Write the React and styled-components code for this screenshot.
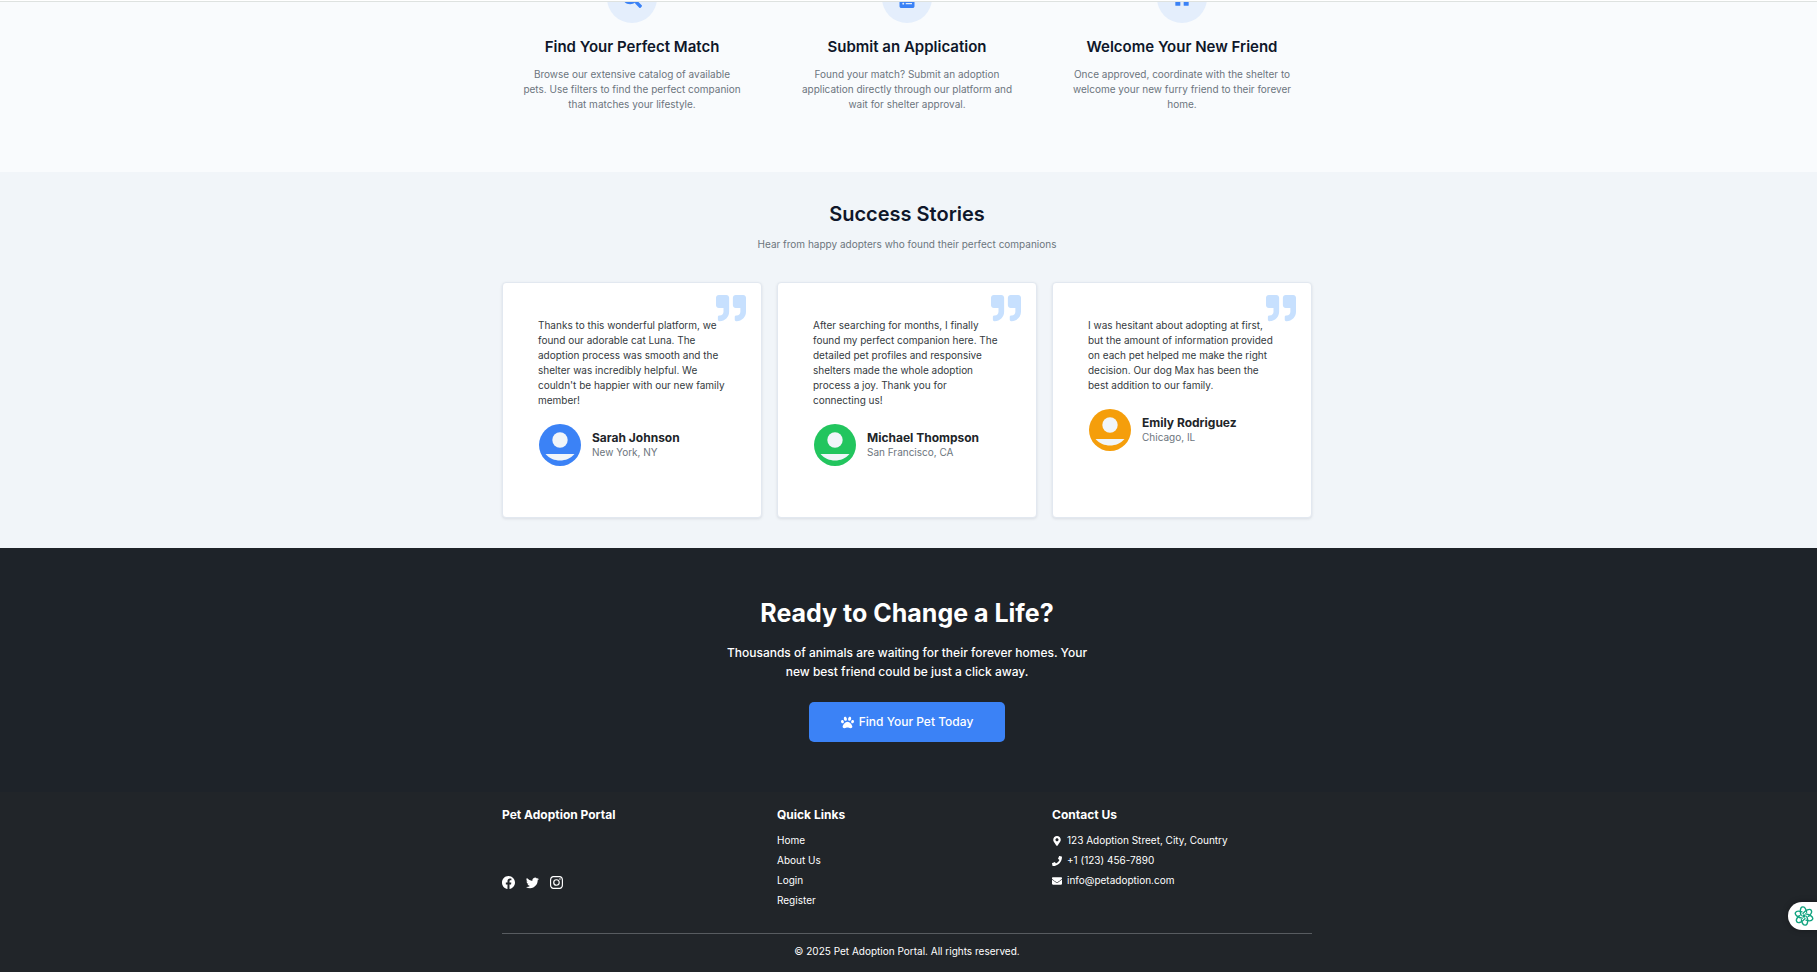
import React from 'react';
import styled, { createGlobalStyle } from 'styled-components';
import { FaSearch, FaClipboardList, FaHome, FaQuoteRight, FaPaw, FaMapMarkerAlt, FaPhone, FaEnvelope } from 'react-icons/fa';
import { BsFacebook, BsTwitter, BsInstagram } from 'react-icons/bs';

const Global = createGlobalStyle`
  * { box-sizing: border-box; }
  html { background: #212529; }
  body {
    margin: 0;
    font-family: Inter, "Liberation Sans", sans-serif;
    font-size: 10px;
    line-height: 15px;
    color: #212529;
  }
  h2, h3, h4, p, ul, blockquote, figure { margin: 0; padding: 0; }
  ul { list-style: none; }
  a { color: inherit; text-decoration: none; }
`;

const Container = styled.div`
  max-width: 810px;
  margin: 0 auto;
`;

const Columns = styled(Container)`
  display: grid;
  grid-template-columns: repeat(3, 1fr);
  column-gap: 15px;
`;

const Page = styled.div`
  padding-right: 3px;
  background: ${({ $bg }) => $bg};
`;

const Header = styled.header`
  height: 2px;
  background: #fff;
  border-bottom: 1px solid #dee2e0;
`;

const Steps = styled(Page)`
  padding-bottom: 60px;
`;

const Step = styled.article`
  display: flex;
  flex-direction: column;
  align-items: center;
  padding: 0 20px;
  text-align: center;
  color: #6c757d;
`;

const IconWindow = styled.div`
  display: flex;
  align-items: flex-end;
  height: 21px;
  overflow: hidden;
`;

const IconCircle = styled.div`
  display: flex;
  align-items: center;
  justify-content: center;
  flex: none;
  width: 50px;
  height: 50px;
  border-radius: 50%;
  background: #e4eefc;
  color: #3b82f6;
  font-size: 20px;
`;

const StepTitle = styled.h3`
  margin: 14px 0 10px;
  font-size: 15px;
  font-weight: 600;
  line-height: 20px;
  color: #0f172a;
`;

const Stories = styled(Page)`
  padding-top: 30px;
  padding-bottom: 30px;
`;

const StoriesHead = styled.header`
  margin-bottom: 30px;
  text-align: center;
  color: #6c757d;
`;

const StoriesTitle = styled.h2`
  margin-bottom: 11px;
  font-size: 20px;
  font-weight: 600;
  line-height: 24px;
  color: #0f172a;
`;

const StoryCard = styled.figure`
  position: relative;
  min-height: 236px;
  padding: 35px;
  border: 1px solid #e2e8f0;
  border-radius: 4px;
  background: #fff;
  box-shadow: 0 1px 3px rgba(15, 23, 42, 0.1);
`;

const QuoteMark = styled(FaQuoteRight)`
  position: absolute;
  top: 10px;
  right: 15px;
  width: 30px;
  height: 30px;
  color: #c7e0fe;
`;

const Quote = styled.blockquote`
  position: relative;
  margin-bottom: 15px;
  color: #343a40;
`;

const Author = styled.figcaption`
  display: flex;
  align-items: center;
  gap: 10px;
  color: #6c757d;
`;

const AuthorName = styled.h4`
  font-size: 12px;
  font-weight: 700;
  line-height: 15px;
  color: #212529;
`;

const CallToAction = styled(Page)`
  display: flex;
  flex-direction: column;
  align-items: center;
  padding-top: 50px;
  padding-bottom: 50px;
  color: #fff;
  text-align: center;
`;

const CtaTitle = styled.h2`
  margin-bottom: 15px;
  font-size: 25px;
  font-weight: 700;
  line-height: 30px;
`;

const CtaText = styled.p`
  max-width: 375px;
  margin-bottom: 21px;
  font-size: 12px;
  font-weight: 500;
  line-height: 19px;
`;

const CtaButton = styled.button`
  display: flex;
  align-items: center;
  gap: 5px;
  height: 40px;
  padding: 0 32px;
  border: 0;
  border-radius: 5px;
  background: #3b82f6;
  color: #fff;
  font: 500 12px/18px Inter, "Liberation Sans", sans-serif;
  cursor: pointer;

  svg {
    width: 13px;
    height: 13px;
  }
`;

const Footer = styled(Page)`
  padding-top: 15px;
  padding-bottom: 12px;
  color: #fff;
`;

const FooterTitle = styled.h4`
  margin-bottom: 11px;
  font-size: 12px;
  font-weight: 700;
  line-height: 15px;
`;

const FooterList = styled.ul`
  display: flex;
  flex-direction: column;
  gap: 5px;
`;

const ContactItem = styled.li`
  display: flex;
  align-items: center;
  gap: 5px;
`;

const Socials = styled.nav`
  display: flex;
  gap: 11px;
  margin-top: 54px;
  font-size: 13px;
`;

const SocialLink = styled.a`
  display: flex;
`;

const Copyright = styled(Container)`
  margin-top: 25px;
  padding-top: 10px;
  border-top: 1px solid #585c60;
  text-align: center;
`;

const Assistant = styled.button`
  position: fixed;
  right: 0;
  bottom: 42px;
  display: flex;
  align-items: center;
  width: 29px;
  height: 28px;
  padding: 0 0 0 6px;
  border: 0;
  border-radius: 14px 0 0 14px;
  background: #fff;
  box-shadow: 0 0 6px rgba(0, 0, 0, 0.3);
  color: #10a37f;
  cursor: pointer;
`;

const Avatar = ({ color }) => (
  <svg width="44" height="44" viewBox="0 0 44 44" aria-hidden="true">
    <circle cx="22" cy="22" r="21" fill={color} />
    <circle cx="22" cy="17" r="7.7" fill="#f1f5f9" />
    <path d="M7.5 31h29C32.5 35.5 27.5 37.5 22 37.5S11.5 35.5 7.5 31Z" fill="#f1f5f9" />
  </svg>
);

const AssistantLogo = () => (
  <svg width="20" height="20" viewBox="0 0 20 20" fill="none" stroke="currentColor" strokeWidth="1.4" strokeLinecap="round" aria-hidden="true">
    {[0, 60, 120, 180, 240, 300].map((angle) => (
      <path key={angle} transform={`rotate(${angle} 10 10)`} d="M7.2 9.5C5.8 6 6 1.2 8.6 .9C10.600 .7 12 3.200 12.600 6.200" />
    ))}
    <circle cx="10" cy="10" r="1.7" fill="currentColor" stroke="none" />
  </svg>
);

const steps = [
  { icon: FaSearch, title: 'Find Your Perfect Match', text: 'Browse our extensive catalog of available pets. Use filters to find the perfect companion that matches your lifestyle.' },
  { icon: FaClipboardList, title: 'Submit an Application', text: 'Found your match? Submit an adoption application directly through our platform and wait for shelter approval.' },
  { icon: FaHome, title: 'Welcome Your New Friend', text: 'Once approved, coordinate with the shelter to welcome your new furry friend to their forever home.' },
];

const stories = [
  { name: 'Sarah Johnson', place: 'New York, NY', color: '#3b82f6', text: "Thanks to this wonderful platform, we found our adorable cat Luna. The adoption process was smooth and the shelter was incredibly helpful. We couldn't be happier with our new family member!" },
  { name: 'Michael Thompson', place: 'San Francisco, CA', color: '#22c55e', text: 'After searching for months, I finally found my perfect companion here. The detailed pet profiles and responsive shelters made the whole adoption process a joy. Thank you for connecting us!' },
  { name: 'Emily Rodriguez', place: 'Chicago, IL', color: '#f59e0b', text: 'I was hesitant about adopting at first, but the amount of information provided on each pet helped me make the right decision. Our dog Max has been the best addition to our family.' },
];

const socials = [
  { icon: BsFacebook, label: 'Facebook' },
  { icon: BsTwitter, label: 'Twitter' },
  { icon: BsInstagram, label: 'Instagram' },
];

const contacts = [
  { icon: FaMapMarkerAlt, text: '123 Adoption Street, City, Country' },
  { icon: FaPhone, text: '+1 (123) 456-7890' },
  { icon: FaEnvelope, text: 'info@petadoption.com' },
];

export default function App() {
  return (
    <>
      <Global />
      <Header />
      <Steps as="section" $bg="#f9fbfd">
        <Columns>
          {steps.map(({ icon: Icon, title, text }) => (
            <Step key={title}>
              <IconWindow><IconCircle><Icon /></IconCircle></IconWindow>
              <StepTitle>{title}</StepTitle>
              <p>{text}</p>
            </Step>
          ))}
        </Columns>
      </Steps>
      <Stories as="section" $bg="#f1f5f9">
        <StoriesHead>
          <StoriesTitle>Success Stories</StoriesTitle>
          <p>Hear from happy adopters who found their perfect companions</p>
        </StoriesHead>
        <Columns>
          {stories.map(({ name, place, color, text }) => (
            <StoryCard key={name}>
              <QuoteMark />
              <Quote>{text}</Quote>
              <Author>
                <Avatar color={color} />
                <div>
                  <AuthorName>{name}</AuthorName>
                  <p>{place}</p>
                </div>
              </Author>
            </StoryCard>
          ))}
        </Columns>
      </Stories>
      <CallToAction as="section" $bg="#1e2329">
        <CtaTitle>Ready to Change a Life?</CtaTitle>
        <CtaText>Thousands of animals are waiting for their forever homes. Your new best friend could be just a click away.</CtaText>
        <CtaButton type="button"><FaPaw />Find Your Pet Today</CtaButton>
      </CallToAction>
      <Footer as="footer" $bg="#212529">
        <Columns>
          <div>
            <FooterTitle>Pet Adoption Portal</FooterTitle>
            <Socials>
              {socials.map(({ icon: Icon, label }) => (
                <SocialLink key={label} href="#" aria-label={label}><Icon /></SocialLink>
              ))}
            </Socials>
          </div>
          <div>
            <FooterTitle>Quick Links</FooterTitle>
            <FooterList>
              {['Home', 'About Us', 'Login', 'Register'].map((label) => (
                <li key={label}><a href="#">{label}</a></li>
              ))}
            </FooterList>
          </div>
          <div>
            <FooterTitle>Contact Us</FooterTitle>
            <FooterList>
              {contacts.map(({ icon: Icon, text }) => (
                <ContactItem key={text}><Icon />{text}</ContactItem>
              ))}
            </FooterList>
          </div>
        </Columns>
        <Copyright>© 2025 Pet Adoption Portal. All rights reserved.</Copyright>
      </Footer>
      <Assistant type="button" aria-label="Open assistant"><AssistantLogo /></Assistant>
    </>
  );
}
